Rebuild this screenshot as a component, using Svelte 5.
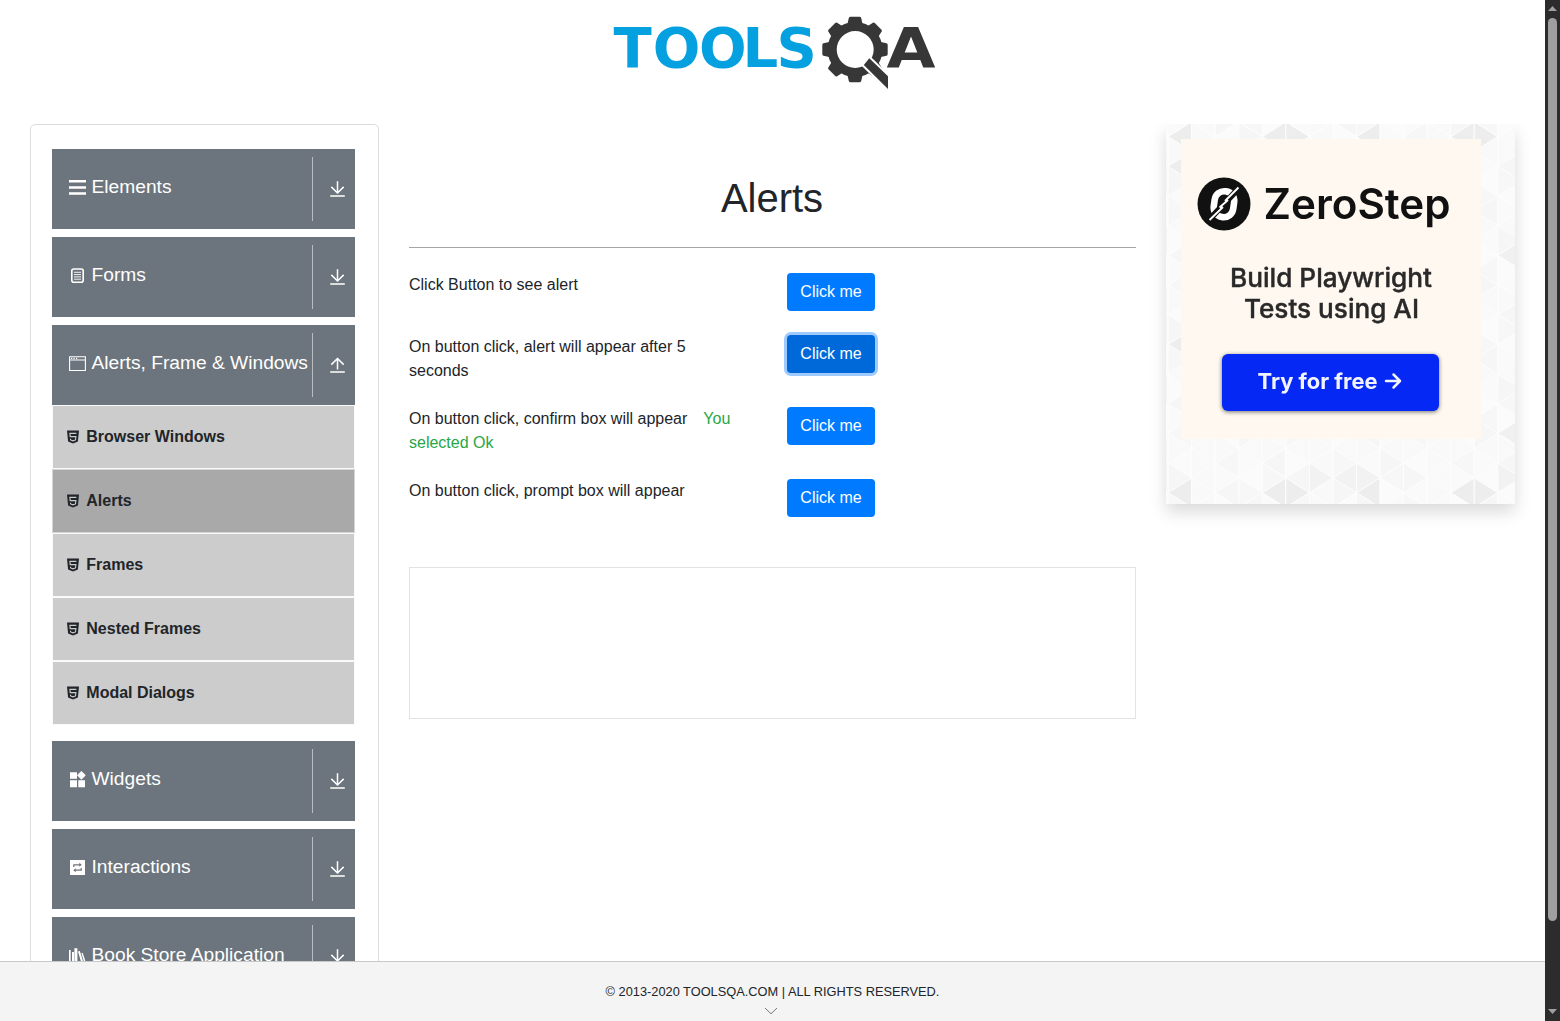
<script>
  const groups = [
    { name: 'Elements', icon: 'list' },
    { name: 'Forms', icon: 'form' },
    { name: 'Alerts, Frame & Windows', icon: 'window', open: true,
      items: ['Browser Windows', 'Alerts', 'Frames', 'Nested Frames', 'Modal Dialogs'] },
    { name: 'Widgets', icon: 'widgets' },
    { name: 'Interactions', icon: 'loop' },
    { name: 'Book Store Application', icon: 'books' }
  ];
  const active = 'Alerts';
  const rows = [
    { text: 'Click Button to see alert' },
    { text: 'On button click, alert will appear after 5 seconds', focused: true },
    { text: 'On button click, confirm box will appear', result: 'You selected Ok' },
    { text: 'On button click, prompt box will appear' }
  ];

  // Triangular wallpaper behind the advertisement
  const dx = 23.55;
  const side = 29.67;
  const triangles = [];
  const darkLeft = [0, 4, 8, 12];
  const darkRight = [5, 13];
  for (let k = -1; k < 15; k++) {
    for (let j = -1; j < 27; j++) {
      const cy = 12.7 + (j * side) / 2;
      const pointsLeft = (k + j) % 2 === 0;
      const x0 = 2.1 + k * dx;
      const x1 = x0 + dx;
      const base = pointsLeft ? x1 : x0;
      const tip = pointsLeft ? x0 : x1;
      let shade = ['#fbfbfb', '#f9f9f9', '#f7f7f7', '#fafafa', '#f6f6f6'][((k + 1) * 7 + (j + 1) * 3 + (k + 1) * (j + 2)) % 5];
      const edgeRow = j === 0 || j === 24;
      if (edgeRow && (pointsLeft ? darkLeft.includes(k) && (j === 24 || k !== 12 || true) : darkRight.includes(k))) shade = '#ededed';
      if (j === 23 && [6, 7, 8, 14].includes(k)) shade = '#f2f2f2';
      if (k === 0 && (j === 2 || j === 14)) shade = '#ededed';
      if (k === 14 && (j === 8 || j === 20)) shade = '#f0f0f0';
      triangles.push({
        points: `${base},${cy - side / 2} ${base},${cy + side / 2} ${tip},${cy}`,
        shade
      });
    }
  }
  const teeth = [0, 45, 90, 135, 180, 225, 270, 315];
</script>

<div class="screen">
  <div class="page">
    <header>
      <svg class="logo" width="330" height="80" viewBox="608 13 330 80">
        <text class="tools" x="613.5 652.8 699 742.5 776.5" y="67">TOOLS</text>
        <g fill="#373737">
          <path fill-rule="evenodd" d="M855 22a27.5 27.5 0 1 0 0 55a27.5 27.5 0 1 0 0-55zM855.2 31a18.5 18.5 0 1 1 0 37a18.5 18.5 0 1 1 0-37z" />
          {#each teeth as angle}
            <path transform="rotate({angle} 855 49.5)" d="M847 26L848.8 18Q849.1 16.8 850.6 16.8H859.4Q860.9 16.8 861.2 18L863 26z" />
          {/each}
          <path class="handle" d="M869.3 58.3L888 76.3V89L863.8 65z" />
        </g>
        <text class="qa" x="886.5" y="67" textLength="49" lengthAdjust="spacingAndGlyphs">A</text>
      </svg>
    </header>

    <div class="columns">
      <nav>
        {#each groups as group}
          <section>
            <div class="group">
              <svg class="icon" width="19" height="19" viewBox="0 0 19 19">
                {#if group.icon === 'list'}
                  <path d="M1 3.3h17M1 9.4h17M1 15.5h17" stroke="#fff" stroke-width="2.5" />
                {:else if group.icon === 'form'}
                  <rect x="3.8" y="3" width="11.4" height="13.2" rx="2" fill="none" stroke="#fff" stroke-width="1.6" />
                  <path d="M6 6.3h7M6 8.6h7M6 10.9h7M6 13.2h7" stroke="#fff" stroke-width="0.9" />
                {:else if group.icon === 'window'}
                  <path d="M1.6 2.8h15.8v13.7H1.6zM1.6 6h15.8" fill="none" stroke="#fff" stroke-width="1.1" />
                  <path d="M3 4.4h1.3M5.5 4.4h1.3M8 4.4h1.3" stroke="#fff" stroke-width="1.4" />
                {:else if group.icon === 'widgets'}
                  <path d="M2 2.2h7v6.6H2zM2 10.2h7v7H2zM10.3 10.2h6.7v7h-6.7zM13.4 .9l4.4 4.4l-4.4 4.4l-4.4-4.4z" fill="#fff" />
                {:else if group.icon === 'loop'}
                  <rect x="2" y="2" width="15" height="15" fill="#fff" />
                  <path d="M5.8 9V6.8h6.5M13.2 10v2.2H6.7" fill="none" stroke="#6c757d" stroke-width="1.2" />
                  <path d="M11.3 4.8l2.4 2l-2.4 2zM7.7 10.2l-2.4 2l2.4 2z" fill="#6c757d" />
                {:else}
                  <path d="M1 4h1.7v14H1zM4 6h2v12H4zM6.4 2.2h3V18h-3zM10 5.5l1.9-.5L15.7 17.5l-2 .5zM13.4 7.2l1.3-.5L18 17l-1.4.8z" fill="#fff" />
                {/if}
              </svg>
              <span class="label">{group.name}</span>
              <span class="toggle">
                <svg width="16" height="17" viewBox="0 0 16 17" fill="none" stroke="#fff" stroke-width="1.5">
                  {#if group.open}
                    <path d="M7.5 12.6V1.6M1.3 7.6L7.5 1.5L13.7 7.6M.2 14.9h14.6" />
                  {:else}
                    <path d="M7.5 .2v11.7M1.3 5.9L7.5 12l6.2-6.1M.2 14.9h14.6" />
                  {/if}
                </svg>
              </span>
            </div>
            {#if group.items}
              <ul>
                {#each group.items as item}
                  <li class:active={item === active}>
                    <svg width="12" height="14" viewBox="0 0 12 14">
                      <path d="M0 .5h12l-1.1 11L6 13.5l-4.9-2z" fill="#212529" />
                      <path d="M9.4 3.4H2.9l.3 3.2h5.7l-.4 3.3L6 10.8l-2.4-.9l-.1-1.2" fill="none" stroke="#ccc" stroke-width="1.1" />
                    </svg>
                    <span>{item}</span>
                  </li>
                {/each}
              </ul>
            {/if}
          </section>
        {/each}
      </nav>

      <main>
        <h1>Alerts</h1>
        <div class="rows">
          {#each rows as row}
            <div class="row">
              <p>{row.text}{#if row.result}<span class="result">{row.result}</span>{/if}</p>
              <button class:focused={row.focused}>Click me</button>
            </div>
          {/each}
        </div>
        <div class="banner"></div>
      </main>

      <aside>
        <svg width="349" height="380" viewBox="0 0 349 380">
          <rect width="349" height="380" fill="#fff" />
          {#each triangles as t}
            <polygon points={t.points} fill={t.shade} stroke="#fdfdfd" stroke-width="1" />
          {/each}
          <g transform="translate(15 15)">
            <rect width="300" height="300" fill="#fef8f1" />
            <g class="ad">
              <circle cx="43" cy="65" r="26.5" fill="#111" />
              <rect x="33.2" y="52.2" width="19.6" height="26" rx="9.5" fill="none" stroke="#fff" stroke-width="6.6" transform="rotate(8 43 65)" />
              <path d="M26 83L59 48" stroke="#111" stroke-width="6" />
              <path d="M28.5 81L42 68M38.5 68.5L47 61M44 62L57.5 48.5" stroke="#fff" stroke-width="1.9" />
              <text class="brand" x="82.5" y="80" textLength="187" lengthAdjust="spacingAndGlyphs">ZeroStep</text>
              <text class="tagline" x="49" y="147.5" textLength="202" lengthAdjust="spacingAndGlyphs">Build Playwright</text>
              <text class="tagline" x="63" y="178.5" textLength="175" lengthAdjust="spacingAndGlyphs">Tests using AI</text>
              <rect class="cta" x="41" y="215" width="217" height="57" rx="6" />
              <text class="cta-text" x="76.5" y="249.5" textLength="120" lengthAdjust="spacingAndGlyphs">Try for free</text>
              <path d="M205 242h14M212.5 235.5l6.5 6.5l-6.5 6.5" fill="none" stroke="#f1f3ff" stroke-width="2.5" stroke-linecap="round" stroke-linejoin="round" />
            </g>
          </g>
        </svg>
      </aside>
    </div>

    <footer>
      <span>© 2013-2020 TOOLSQA.COM | ALL RIGHTS RESERVED.</span>
      <svg width="14" height="8" viewBox="0 0 14 8"><path d="M1 1l6 5.8L13 1" fill="none" stroke="#777" /></svg>
    </footer>
  </div>

  <div class="scrollbar">
    <svg width="9" height="5" viewBox="0 0 9 5"><path d="M0 5L4.5 0L9 5z" fill="#9f9f9f" /></svg>
    <div class="thumb"></div>
    <svg width="9" height="5" viewBox="0 0 9 5"><path d="M0 0L4.5 5L9 0z" fill="#9f9f9f" /></svg>
  </div>
</div>

<style>
  :global(body) { overflow: hidden; }
  .screen {
    display: flex;
    width: 1560px;
    height: 1021px;
    font: 16px/24px "Liberation Sans", Arial, sans-serif;
    color: #212529;
    background: #fff;
  }
  .screen * { box-sizing: border-box; }
  svg { display: block; flex: none; }
  .page { width: 1545px; height: 1021px; display: flex; flex-direction: column; }
  header { height: 124px; flex: none; padding: 13px 0 0 608px; }
  .tools { font: bold 56px "DejaVu Sans", sans-serif; fill: #05a0df; }
  .qa { font: bold 56px "DejaVu Sans", sans-serif; fill: #373737; }
  .handle { stroke: #fff; stroke-width: 4px; paint-order: stroke; }
  .columns {
    flex: 1;
    min-height: 0;
    overflow: hidden;
    display: grid;
    grid-template-columns: 349px 727px 349px;
    column-gap: 30px;
    align-items: start;
    padding-left: 30px;
  }
  nav {
    height: 1000px;
    border: 1px solid #dcdcdc;
    border-radius: 5px;
    padding: 24px 23px 0 21px;
    display: flex;
    flex-direction: column;
    gap: 8px;
  }
  .group {
    height: 80px;
    background: #6c757d;
    color: #fff;
    display: flex;
    align-items: flex-start;
    padding: 8px 0 0 16px;
    font-size: 19.2px;
  }
  .icon { margin-top: 21px; }
  .label { margin: 18px 0 0 4.5px; width: 220.5px; white-space: nowrap; }
  .toggle {
    height: 64px;
    border-left: 1px solid #b9bdc1;
    padding: 24px 0 0 17px;
  }
  ul { list-style: none; margin: 0 0 8px; padding: 0; }
  li {
    height: 64px;
    border: 1px solid #fafafa;
    background: #ccc;
    display: flex;
    align-items: center;
    gap: 7.3px;
    padding-left: 14px;
    font-weight: bold;
  }
  li span { margin-top: -1px; }
  li.active { background: #a9a9a9; border-color: #d3d6d9; }
  h1 {
    margin: 0;
    height: 124px;
    padding: 50px 1px 0 0;
    border-bottom: 1px solid #a6a6a6;
    text-align: center;
    font-size: 40px;
    line-height: 48px;
    font-weight: 500;
  }
  .rows { padding-top: 25px; display: flex; flex-direction: column; }
  .row { display: grid; grid-template-columns: 333px 88px; column-gap: 45px; align-items: start; min-height: 72px; }
  .row:first-child { min-height: 62px; }
  p { margin: 0; }
  .result { color: #28a745; padding-left: 16px; }
  button {
    height: 38px;
    border: 0;
    border-radius: 4px;
    background: #007bff;
    color: #fff;
    font: inherit;
    padding: 0 0 1px;
  }
  button.focused { background: #0069d9; box-shadow: 0 0 0 3px #9ecbff; }
  .banner { height: 152px; margin-top: 16px; border: 1px solid #e3e3e3; }
  aside { box-shadow: 0 8px 16px rgba(0, 0, 0, 0.15); }
  .ad { font-family: Inter, sans-serif; filter: blur(0.45px); }
  .brand { font-size: 42px; font-weight: 600; fill: #111; }
  .tagline { font-size: 26px; font-weight: 500; fill: #292929; stroke: #292929; stroke-width: 0.4px; }
  .cta-text { font-size: 21.5px; font-weight: 700; fill: #f1f3ff; }
  .cta { fill: #0528f5; filter: drop-shadow(0 1px 2px rgba(0, 0, 0, 0.55)); }
  footer {
    height: 60px;
    flex: none;
    background: #f4f4f4;
    border-top: 1px solid #c8c8c8;
    display: flex;
    flex-direction: column;
    align-items: center;
    padding-top: 18px;
    font-size: 12.8px;
  }
  footer svg { margin: 3px 3px 0 0; }
  .scrollbar {
    width: 15px;
    height: 1021px;
    background: #2c2c2c;
    display: flex;
    flex-direction: column;
    align-items: center;
    padding: 6px 0 7px;
  }
  .thumb { width: 9px; height: 903px; margin: 7px 0 88px; border-radius: 5px; background: #9f9f9f; }
</style>
